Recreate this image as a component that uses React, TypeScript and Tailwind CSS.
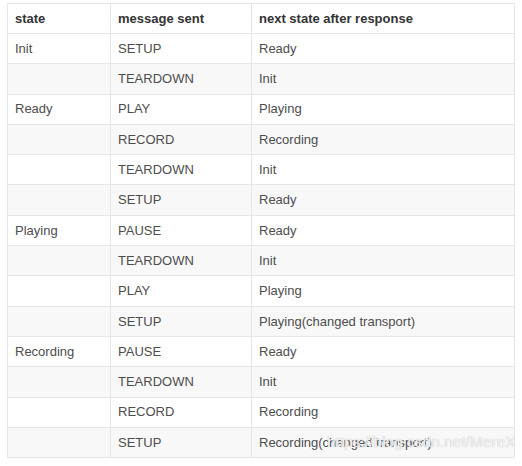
const rows: [string, string, string][] = [
  ["Init", "SETUP", "Ready"],
  ["", "TEARDOWN", "Init"],
  ["Ready", "PLAY", "Playing"],
  ["", "RECORD", "Recording"],
  ["", "TEARDOWN", "Init"],
  ["", "SETUP", "Ready"],
  ["Playing", "PAUSE", "Ready"],
  ["", "TEARDOWN", "Init"],
  ["", "PLAY", "Playing"],
  ["", "SETUP", "Playing(changed transport)"],
  ["Recording", "PAUSE", "Ready"],
  ["", "TEARDOWN", "Init"],
  ["", "RECORD", "Recording"],
  ["", "SETUP", "Recording(changed transport)"],
];

export default function App() {
  return (
    <div className="relative w-[522px] h-[466px] bg-white pl-[7px] pt-[3px] font-['Liberation_Sans',Arial,sans-serif] text-[13px]">
      <table className="border-collapse w-[508px] table-fixed">
        <colgroup>
          <col className="w-[103px]" />
          <col className="w-[141px]" />
          <col />
        </colgroup>
        <thead>
          <tr className="h-[30px]">
            <th className="border border-[#e6e6e6] px-[7px] text-left font-bold text-[#333]">state</th>
            <th className="border border-[#e6e6e6] px-[7px] text-left font-bold text-[#333]">message sent</th>
            <th className="border border-[#e6e6e6] px-[7px] text-left font-bold text-[#333]">next state after response</th>
          </tr>
        </thead>
        <tbody>
          {rows.map((r, i) => (
            <tr key={i} className={`h-[30.3px] ${i % 2 === 1 ? "bg-[#f8f8f8]" : "bg-white"}`}>
              {r.map((c, j) => (
                <td key={j} className="border border-[#e6e6e6] px-[7px] text-[#4d4d4d] whitespace-nowrap">
                  {c}
                </td>
              ))}
            </tr>
          ))}
        </tbody>
      </table>
      {/* blog watermark */}
      <span className="absolute left-[327px] top-[434px] text-[15.5px] leading-none text-white/80 [text-shadow:0_0_1px_#aaa] pointer-events-none">
        https://blog.csdn.net/MereX
      </span>
    </div>
  );
}
